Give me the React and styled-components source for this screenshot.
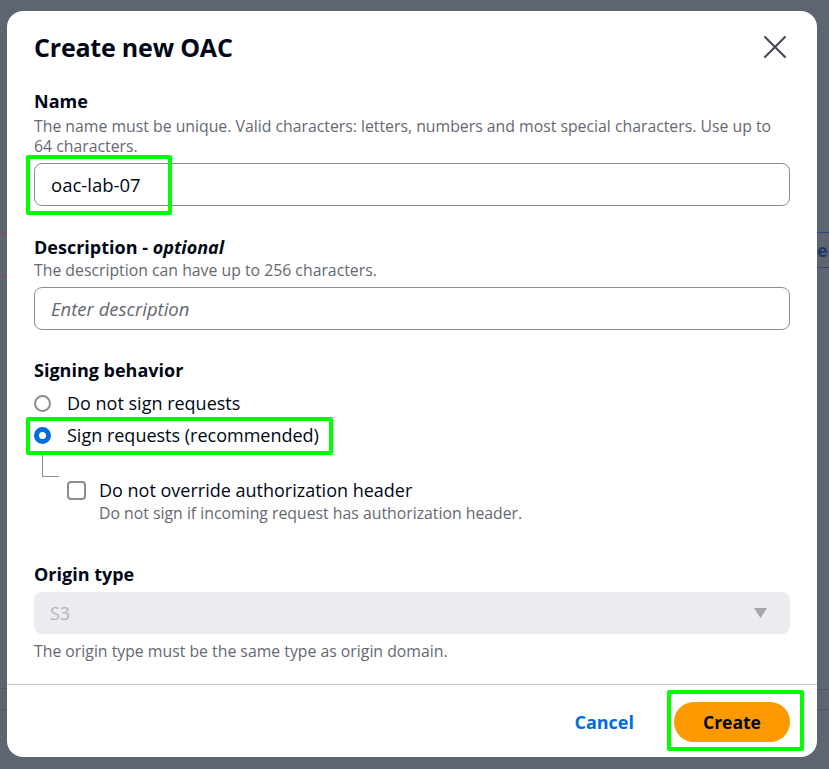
import React from "react";
import styled, { createGlobalStyle } from "styled-components";

const Global = createGlobalStyle`
  html, body { margin: 0; padding: 0; }
  body {
    background: #5f6570;
    font-family: "Open Sans", "Noto Sans", sans-serif;
    color: #000716;
  }
  * { box-sizing: border-box; }
`;

const Page = styled.div`
  position: relative;
  width: 829px;
  height: 769px;
  overflow: hidden;
  background: #5f6570;
  padding: 11px 12px 12px 7px;
`;

const BgLine = styled.div`
  position: absolute;
  height: 1px;
  background: ${(p) => p.$color};
  top: ${(p) => p.$top}px;
  left: ${(p) => p.$left}px;
  width: ${(p) => p.$width}px;
`;

const BgText = styled.div`
  position: absolute;
  left: 817px;
  top: 238px;
  width: 12px;
  overflow: hidden;
  white-space: nowrap;
  font-size: 18px;
  font-weight: 700;
  color: #1b3a6b;
`;

const Modal = styled.div`
  position: relative;
  z-index: 1;
  width: 810px;
  height: 746px;
  background: #ffffff;
  border-radius: 16px;
  display: flex;
  flex-direction: column;
`;

const Header = styled.div`
  display: flex;
  align-items: center;
  justify-content: space-between;
  padding: 20px 27px 0 27px;
`;

const Title = styled.h2`
  margin: 0;
  font-size: 25px;
  line-height: 32px;
  font-weight: 700;
  letter-spacing: -0.2px;
`;

const CloseButton = styled.button`
  border: none;
  background: transparent;
  padding: 0;
  width: 26px;
  height: 26px;
  display: flex;
  align-items: center;
  justify-content: center;
  margin-right: 2px;
  cursor: pointer;
`;

const Body = styled.div`
  flex: 1;
  padding: 27px 27px 0 27px;
  display: flex;
  flex-direction: column;
`;

const Field = styled.div`
  display: flex;
  flex-direction: column;
  margin-bottom: ${(p) => p.$mb || 0}px;
`;

const Label = styled.div`
  font-size: 18px;
  line-height: 22px;
  font-weight: 700;
`;

const Optional = styled.i`
  font-weight: 700;
`;

const Hint = styled.div`
  font-size: 15.8px;
  line-height: 20px;
  color: #656871;
  margin-top: ${(p) => p.$mt ?? 4}px;
`;

const InputWrap = styled.div`
  position: relative;
  margin-top: 7px;
`;

const Input = styled.div`
  height: 43px;
  border: 1px solid #8c8c94;
  border-radius: 8px;
  padding: 0 16px;
  display: flex;
  align-items: center;
  font-size: 18.5px;
  color: ${(p) => (p.$placeholder ? "#656871" : "#000716")};
  font-style: ${(p) => (p.$placeholder ? "italic" : "normal")};
`;

const Highlight = styled.div`
  position: absolute;
  border: 4px solid #00ff00;
  border-radius: 2px;
  pointer-events: none;
  left: ${(p) => p.$l}px;
  top: ${(p) => p.$t}px;
  width: ${(p) => p.$w}px;
  height: ${(p) => p.$h}px;
`;

const RadioGroup = styled.div`
  display: flex;
  flex-direction: column;
  margin-top: 6px;
`;

const RadioRow = styled.div`
  position: relative;
  display: flex;
  align-items: center;
  gap: 16px;
  height: 32px;
  font-size: 18px;
`;

const RadioCircle = styled.span`
  width: 17px;
  height: 17px;
  border-radius: 50%;
  flex: none;
  border: ${(p) => (p.$checked ? "5px solid #006ce0" : "2px solid #8c8c94")};
  background: #fff;
`;

const Nested = styled.div`
  display: flex;
  align-items: flex-start;
  margin-top: 2px;
`;

const Connector = styled.div`
  width: 17px;
  height: 24px;
  margin-left: 8px;
  border-left: 1px solid #8c8c94;
  border-bottom: 1px solid #8c8c94;
  flex: none;
`;

const CheckGroup = styled.div`
  display: flex;
  gap: 13px;
  margin-left: 8px;
  margin-top: 26px;
`;

const CheckBox = styled.span`
  width: 19px;
  height: 19px;
  border: 2px solid #8c8c94;
  border-radius: 4px;
  flex: none;
  margin-top: 2px;
`;

const CheckText = styled.div`
  display: flex;
  flex-direction: column;
`;

const CheckLabel = styled.div`
  font-size: 18px;
  line-height: 22px;
`;

const Select = styled.div`
  margin-top: 7px;
  height: 42px;
  border-radius: 8px;
  background: #ebebf0;
  display: flex;
  align-items: center;
  justify-content: space-between;
  padding: 0 23px 0 16px;
  font-size: 18px;
  color: #b4b4bb;
`;

const Divider = styled.div`
  height: 1px;
  background: #c6c6cd;
`;

const Footer = styled.div`
  height: 72px;
  display: flex;
  align-items: center;
  justify-content: flex-end;
  gap: 40px;
  padding: 2px 27px 0 0;
`;

const LinkButton = styled.button`
  border: none;
  background: transparent;
  font-family: inherit;
  font-size: 18px;
  font-weight: 700;
  color: #006ce0;
  padding: 0;
  cursor: pointer;
`;

const PrimaryWrap = styled.div`
  position: relative;
`;

const PrimaryButton = styled.button`
  border: none;
  background: #ff9900;
  color: #000716;
  font-family: inherit;
  font-size: 17.5px;
  font-weight: 700;
  width: 116px;
  height: 40px;
  border-radius: 20px;
  cursor: pointer;
`;

export default function App() {
  return (
    <>
      <Global />
      <Page>
        <BgLine $color="#8a4150" $top={233} $left={0} $width={7} />
        <BgLine $color="#8a4150" $top={276} $left={0} $width={7} />
        <BgLine $color="#26477a" $top={232} $left={817} $width={12} />
        <BgLine $color="#26477a" $top={267} $left={817} $width={12} />
        <BgText>ea</BgText>
        <BgLine $color="#4f555e" $top={688} $left={0} $width={7} />
        <BgLine $color="#4f555e" $top={709} $left={0} $width={7} />
        <BgLine $color="#4f555e" $top={689} $left={817} $width={12} />
        <BgLine $color="#4f555e" $top={709} $left={817} $width={12} />
        <Modal>
          <Header>
            <Title>Create new OAC</Title>
            <CloseButton aria-label="Close">
              <svg width="24" height="24" viewBox="0 0 24 24">
                <path d="M2 2 L22 22 M22 2 L2 22" stroke="#424650" strokeWidth="2" strokeLinecap="round" fill="none" />
              </svg>
            </CloseButton>
          </Header>
          <Body>
            <Field $mb={30}>
              <Label>Name</Label>
              <Hint>
                The name must be unique. Valid characters: letters, numbers and most special characters. Use up to
                64 characters.
              </Hint>
              <InputWrap>
                <Input>oac-lab-07</Input>
                <Highlight $l={-8} $t={-8} $w={146} $h={60} />
              </InputWrap>
            </Field>
            <Field $mb={29}>
              <Label>
                Description - <Optional>optional</Optional>
              </Label>
              <Hint $mt={2}>The description can have up to 256 characters.</Hint>
              <InputWrap>
                <Input $placeholder>Enter description</Input>
              </InputWrap>
            </Field>
            <Field $mb={40}>
              <Label>Signing behavior</Label>
              <RadioGroup>
                <RadioRow>
                  <RadioCircle />
                  Do not sign requests
                </RadioRow>
                <RadioRow>
                  <RadioCircle $checked />
                  Sign requests (recommended)
                  <Highlight $l={-8} $t={-2} $w={307} $h={38} />
                </RadioRow>
              </RadioGroup>
              <Nested>
                <Connector />
                <CheckGroup>
                  <CheckBox />
                  <CheckText>
                    <CheckLabel>Do not override authorization header</CheckLabel>
                    <Hint $mt={2}>Do not sign if incoming request has authorization header.</Hint>
                  </CheckText>
                </CheckGroup>
              </Nested>
            </Field>
            <Field>
              <Label>Origin type</Label>
              <Select>
                <span>S3</span>
                <svg width="13" height="10" viewBox="0 0 13 10">
                  <path d="M0 0 H13 L6.5 10 Z" fill="#a4a4ad" />
                </svg>
              </Select>
              <Hint $mt={7}>The origin type must be the same type as origin domain.</Hint>
            </Field>
          </Body>
          <Divider />
          <Footer>
            <LinkButton>Cancel</LinkButton>
            <PrimaryWrap>
              <PrimaryButton>Create</PrimaryButton>
              <Highlight $l={-7} $t={-12} $w={137} $h={61} />
            </PrimaryWrap>
          </Footer>
        </Modal>
      </Page>
    </>
  );
}
